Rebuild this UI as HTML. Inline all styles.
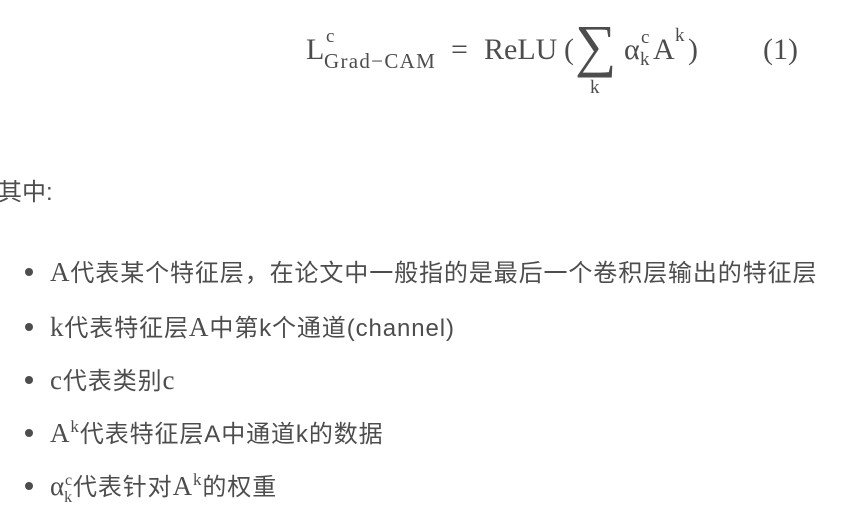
<!DOCTYPE html>
<html><head><meta charset="utf-8"><style>
body{margin:0;width:852px;height:504px;background:#fff;color:#4d4d4d;position:relative;overflow:hidden;font-family:"Liberation Sans","Noto Sans CJK SC",sans-serif}
.m{font-family:"Liberation Serif","DejaVu Serif",serif}
.a{position:absolute;white-space:nowrap;line-height:36px}
.f{font-size:30px}
.s{font-size:19px}
.li{position:absolute;left:50px;font-size:24px;letter-spacing:0.9px;white-space:nowrap;line-height:30px}
.li .m{font-size:27px}
.dot{position:absolute;left:25px;width:8px;height:8px;border-radius:50%;background:#4d4d4d}
</style></head><body>
<div class="a m f" style="left:306px;top:32px">L</div>
<div class="a m s" style="left:326px;top:19px">c</div>
<div class="a m" style="left:324px;top:43px;font-size:21px;letter-spacing:1.3px">Grad−CAM</div>
<div class="a m f" style="left:451px;top:32px">=</div>
<div class="a m f" style="left:484px;top:32px">ReLU</div>
<div class="a m f" style="left:564px;top:32px">(</div>
<div class="a m" style="left:575px;top:14px;font-size:58px;line-height:64px">∑</div>
<div class="a m s" style="left:590px;top:70px">k</div>
<div class="a m f" style="left:624px;top:32px">α</div>
<div class="a m s" style="left:641px;top:20px">c</div>
<div class="a m s" style="left:640px;top:42px">k</div>
<div class="a m f" style="left:653px;top:32px">A</div>
<div class="a m s" style="left:675px;top:18px">k</div>
<div class="a m f" style="left:688px;top:32px">)</div>
<div class="a m f" style="left:763px;top:32px">(1)</div>
<div class="a" style="left:-2px;top:178px;font-size:24px;line-height:30px">其中:</div>

<div class="dot" style="top:268px"></div>
<div class="li" style="top:257px"><span class="m">A</span>代表某个特征层，在论文中一般指的是最后一个卷积层输出的特征层</div>
<div class="dot" style="top:323px"></div>
<div class="li" style="top:312px"><span class="m">k</span>代表特征层<span class="m">A</span>中第k个通道(channel)</div>
<div class="dot" style="top:376px"></div>
<div class="li" style="top:365px"><span class="m">c</span>代表类别<span class="m">c</span></div>
<div class="dot" style="top:429px"></div>
<div class="li" style="top:418px"><span class="m">A<span style="position:relative;top:-10px;font-size:17px">k</span></span>代表特征层A中通道k的数据</div>
<div class="dot" style="top:482px"></div>
<div class="li" style="top:471px"><span class="m">α<span style="position:relative;top:-10px;font-size:16px">c</span><span style="position:relative;top:7px;font-size:16px;margin-left:-9px">k</span></span>代表针对<span class="m">A<span style="position:relative;top:-10px;font-size:17px">k</span></span>的权重</div>
</body></html>
